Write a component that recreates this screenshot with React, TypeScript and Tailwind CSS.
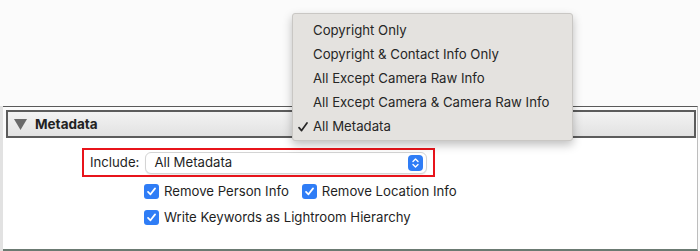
import React from "react";

const menuItems = [
  "Copyright Only",
  "Copyright & Contact Info Only",
  "All Except Camera Raw Info",
  "All Except Camera & Camera Raw Info",
  "All Metadata",
];

function Check() {
  return (
    <span className="w-[15px] h-[15px] rounded-[3px] bg-[#2f7df6] flex items-center justify-center shrink-0">
      <svg width="11" height="11" viewBox="0 0 12 12" fill="none">
        <path d="M2.2 6.4 L4.9 9.1 L9.9 2.6" stroke="white" strokeWidth="1.9" strokeLinecap="round" strokeLinejoin="round" />
      </svg>
    </span>
  );
}

export default function App() {
  return (
    <div
      className="relative w-[700px] h-[251px] bg-[#fbfbfb] overflow-hidden text-[#1f1f1f]"
      style={{ fontFamily: "Inter, 'Liberation Sans', sans-serif" }}
    >
      <div className="pt-[106px] flex h-full">
        <div className="w-[3px] bg-[#e2e2e2] shrink-0" />
        <div className="flex-1 flex flex-col border-t border-[#5a5a5a] border-b-2 border-b-[#6b7a72] border-r border-r-[#bdbdbd] mr-[2px]">
          <div className="mt-[3px] ml-[3px] mr-[1px] h-[28px] border-2 border-[#5c5c5c] bg-gradient-to-b from-[#f3f3f3] to-[#e2e2e2] flex items-center pl-[6px] gap-[8px]">
            <svg width="13" height="11" viewBox="0 0 13 11">
              <path d="M0 0 H13 L6.5 11 Z" fill="#6a6a6a" />
            </svg>
            <span className="text-[13.5px] font-bold text-[#222]">Metadata</span>
          </div>
          <div className="flex-1 bg-white pt-[10px]">
            <div className="ml-[79px] w-[353px] h-[29px] border-2 border-[#e8141b] flex items-center pl-[6px] gap-[6px]">
              <span className="text-[13.2px]">Include:</span>
              <div className="w-[282px] h-[22px] rounded-[6px] border border-[#d4d4d4] bg-white shadow-[0_1px_1px_rgba(0,0,0,0.08)] flex items-center justify-between pl-[8px] pr-[3px]">
                <span className="text-[13.2px]">All Metadata</span>
                <span className="w-[15px] h-[16px] rounded-[4px] bg-[#2f7df6] flex items-center justify-center">
                  <svg width="9" height="12" viewBox="0 0 9 12" fill="none">
                    <path d="M2 4.5 L4.5 2 L7 4.5 M2 7.5 L4.5 10 L7 7.5" stroke="white" strokeWidth="1.4" strokeLinecap="round" strokeLinejoin="round" />
                  </svg>
                </span>
              </div>
            </div>
            <div className="ml-[141px] mt-[7px] flex flex-col gap-[11px]">
              <div className="flex items-center h-[15px]">
                <Check />
                <span className="text-[13.2px] ml-[5px]">Remove Person Info</span>
                <span className="ml-[13px]"><Check /></span>
                <span className="text-[13.2px] ml-[5px]">Remove Location Info</span>
              </div>
              <div className="flex items-center h-[15px]">
                <Check />
                <span className="text-[13.2px] ml-[5px]">Write Keywords as Lightroom Hierarchy</span>
              </div>
            </div>
          </div>
        </div>
      </div>

      <div className="absolute left-[292px] top-[13px] w-[281px] h-[128px] bg-[#e4e2df] border border-[#c9c7c4] rounded-[3px] shadow-[0_4px_10px_rgba(0,0,0,0.25)] pt-[5px] flex flex-col">
        {menuItems.map((item, i) => (
          <div key={item} className="h-[24px] flex items-center text-[13.2px] text-[#262626]">
            <span className="w-[20px] pl-[5px] flex items-center">
              {i === 4 && (
                <svg width="10" height="10" viewBox="0 0 10 10" fill="none">
                  <path d="M1 5.6 L3.6 8.6 L9 1" stroke="#262626" strokeWidth="1.7" strokeLinecap="round" strokeLinejoin="round" />
                </svg>
              )}
            </span>
            <span>{item}</span>
          </div>
        ))}
      </div>
    </div>
  );
}
